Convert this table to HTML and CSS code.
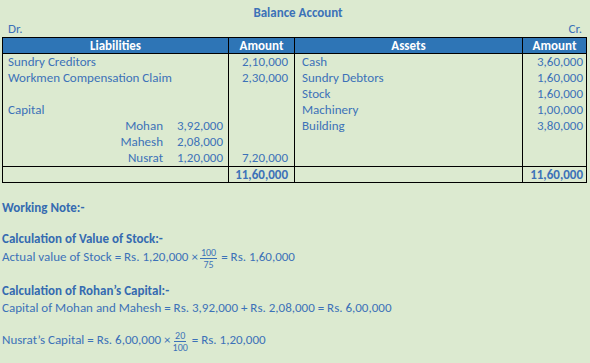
FILE: index.html
```html
<!DOCTYPE html>
<html>
<head>
<meta charset="utf-8">
<link rel="stylesheet" href="styles.css">
</head>
<body>
<div class="page">
  <div class="title">Balance Account</div>
  <div class="drcr"><span>Dr.</span><span>Cr.</span></div>
  <table class="ledger">
    <colgroup>
      <col class="c1"><col class="c2"><col class="c3"><col class="c4">
    </colgroup>
    <thead>
      <tr><th>Liabilities</th><th>Amount</th><th>Assets</th><th>Amount</th></tr>
    </thead>
    <tbody>
      <tr><td>Sundry Creditors</td><td class="num">2,10,000</td><td class="as">Cash</td><td class="num r">3,60,000</td></tr>
      <tr><td>Workmen Compensation Claim</td><td class="num">2,30,000</td><td class="as">Sundry Debtors</td><td class="num r">1,60,000</td></tr>
      <tr><td></td><td></td><td class="as">Stock</td><td class="num r">1,60,000</td></tr>
      <tr><td>Capital</td><td></td><td class="as">Machinery</td><td class="num r">1,00,000</td></tr>
      <tr><td class="sub"><span class="nm">Mohan</span><span class="am">3,92,000</span></td><td></td><td class="as">Building</td><td class="num r">3,80,000</td></tr>
      <tr><td class="sub"><span class="nm">Mahesh</span><span class="am">2,08,000</span></td><td></td><td></td><td></td></tr>
      <tr><td class="sub"><span class="nm">Nusrat</span><span class="am">1,20,000</span></td><td class="num">7,20,000</td><td></td><td></td></tr>
      <tr class="total"><td></td><td class="num b">11,60,000</td><td></td><td class="num r b">11,60,000</td></tr>
    </tbody>
  </table>
  <div class="notes">
    <p class="h wn">Working Note:-</p>
    <p class="h sec">Calculation of Value of Stock:-</p>
    <p class="line">Actual value of Stock = Rs. 1,20,000 <span class="x">×</span><span class="frac"><span class="top">100</span><span class="bot">75</span></span> = Rs. 1,60,000</p>
    <p class="h sec2">Calculation of Rohan’s Capital:-</p>
    <p class="plain">Capital of Mohan and Mahesh = Rs. 3,92,000 + Rs. 2,08,000 = Rs. 6,00,000</p>
    <p class="line last">Nusrat’s Capital = Rs. 6,00,000 <span class="x">×</span><span class="frac"><span class="top">20</span><span class="bot">100</span></span> = Rs. 1,20,000</p>
  </div>
</div>
</body>
</html>
```
FILE: styles.css
```css
html, body {
  margin: 0;
  padding: 0;
  background: #dcead0;
}
body {
  font-family: Carlito, Calibri, Lato, "Open Sans", sans-serif;
  font-size: 13px;
  color: #3c72b8;
}
.page {
  width: 590px;
  height: 363px;
  padding: 0 4px 0 2px;
  box-sizing: border-box;
  overflow: hidden;
}
.title {
  padding-top: 5px;
  line-height: 16px;
  text-align: center;
  font-weight: bold;
  padding-left: 8px;
}
.drcr {
  display: flex;
  justify-content: space-between;
  line-height: 16px;
  padding: 0 4px 0 6px;
}
.ledger {
  width: 584px;
  table-layout: fixed;
  border-collapse: collapse;
  border: 1px solid #000;
}
.c1 { width: 226px; }
.c2 { width: 66px; }
.c3 { width: 228px; }
.c4 { width: 64px; }
.ledger th {
  background: #2e75b6;
  color: #fff;
  font-weight: bold;
  height: 15px;
  padding: 0;
  line-height: 15px;
  border: 1px solid #000;
  text-align: center;
}
.ledger td {
  padding: 0 0 0 5px;
  height: 16px;
  line-height: 16px;
  border-left: 1px solid #000;
  border-right: 1px solid #000;
  white-space: nowrap;
}
.ledger td.as { padding-left: 7px; }
.ledger td.num { text-align: right; padding: 0 6px 0 0; }
.ledger td.num.r { padding-right: 3px; }
.ledger td.b { font-weight: bold; }
.ledger tr.total td {
  border-top: 1px solid #000;
  height: 15px;
  line-height: 15px;
}
.ledger td.sub {
  display: flex;
  justify-content: flex-end;
  gap: 6px;
  padding: 0 5px 0 0;
  border-left: none;
  border-right: none;
}
.sub .am { width: 54px; text-align: right; }
.notes p { margin: 0; line-height: 16px; white-space: nowrap; }
.notes .h { font-weight: bold; color: #356bb0; }
.notes .wn { margin-top: 17px; }
.notes .sec { margin-top: 15px; }
.notes .line {
  display: flex;
  align-items: center;
  height: 20px;
  margin-top: 0;
}
.notes .sec2 { margin-top: 16px; }
.notes .plain { margin-top: 1px; }
.notes .last { margin-top: 14px; }
.x { margin: 0 2px 0 3px; }
.frac {
  display: inline-flex;
  flex-direction: column;
  align-items: center;
  font-size: 10px;
  line-height: 11px;
  margin: 0 4px 0 0;
  position: relative;
  top: 1px;
}
.frac .top {
  border-bottom: 1px solid #3c72b8;
  padding: 0 1px;
}
```
